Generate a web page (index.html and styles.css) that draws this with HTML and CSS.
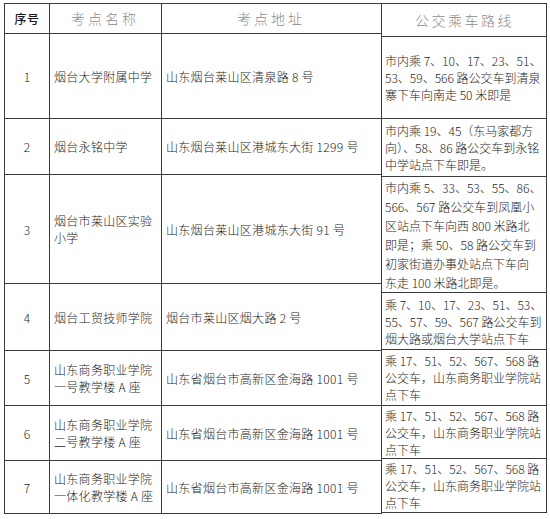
FILE: index.html
```html
<!DOCTYPE html>
<html lang="zh-CN">
<head>
<meta charset="utf-8">
<title>考点</title>
<link rel="stylesheet" href="styles.css">
</head>
<body>
<div class="sheet">
  <div class="main">
    <div class="cell head num">序号</div>
    <div class="cell head title">考点名称</div>
    <div class="cell head title">考点地址</div>

    <div class="cell num">1</div>
    <div class="cell">烟台大学附属中学</div>
    <div class="cell">山东烟台莱山区清泉路 8 号</div>

    <div class="cell num">2</div>
    <div class="cell">烟台永铭中学</div>
    <div class="cell">山东烟台莱山区港城东大街 1299 号</div>

    <div class="cell num">3</div>
    <div class="cell">烟台市莱山区实验<br>小学</div>
    <div class="cell">山东烟台莱山区港城东大街 91 号</div>

    <div class="cell num">4</div>
    <div class="cell">烟台工贸技师学院</div>
    <div class="cell">烟台市莱山区烟大路 2 号</div>

    <div class="cell num">5</div>
    <div class="cell">山东商务职业学院<br>一号教学楼 A 座</div>
    <div class="cell">山东省烟台市高新区金海路 1001 号</div>

    <div class="cell num">6</div>
    <div class="cell">山东商务职业学院<br>二号教学楼 A 座</div>
    <div class="cell">山东省烟台市高新区金海路 1001 号</div>

    <div class="cell num">7</div>
    <div class="cell">山东商务职业学院<br>一体化教学楼 A 座</div>
    <div class="cell">山东省烟台市高新区金海路 1001 号</div>
  </div>

  <div class="routes">
    <div class="cell head title wide">公交乘车路线</div>
    <div class="cell">市内乘 7、10、17、23、51、<br>53、59、566 路公交车到清泉<br>寨下车向南走 50 米即是</div>
    <div class="cell">市内乘 19、45（东马家都方<br>向）、58、86 路公交车到永铭<br>中学站点下车即是。</div>
    <div class="cell tall">市内乘 5、33、53、55、86、<br>566、567 路公交车到凤凰小<br>区站点下车向西 800 米路北<br>即是；乘 50、58 路公交车到<br>初家街道办事处站点下车向<br>东走 100 米路北即是。</div>
    <div class="cell">乘 7、10、17、23、51、53、<br>55、57、59、567 路公交车到<br>烟大路或烟台大学站点下车</div>
    <div class="cell">乘 17、51、52、567、568 路<br>公交车，山东商务职业学院站<br>点下车</div>
    <div class="cell">乘 17、51、52、567、568 路<br>公交车，山东商务职业学院站<br>点下车</div>
    <div class="cell">乘 17、51、52、567、568 路<br>公交车，山东商务职业学院站<br>点下车</div>
  </div>
</div>
</body>
</html>
```
FILE: styles.css
```css
html, body {
  margin: 0;
  padding: 0;
  background: #ffffff;
}

body {
  font-family: "Liberation Sans Narrow", "Noto Sans CJK SC", sans-serif;
  font-size: 12px;
  font-weight: 300;
  line-height: 17px;
  letter-spacing: 0.3px;
  color: #1e1e1e;
}

.sheet {
  display: flex;
  align-items: flex-start;
  padding: 3px 0 0 4px;
}

.main {
  display: grid;
  grid-template-columns: 44px 111px 219px;
  grid-template-rows: 29px 84px 55px 108px 66px 54px 54px 52px;
  gap: 1px;
  padding: 1px;
  background: #3a3a3a;
}

.routes {
  display: grid;
  grid-template-columns: 164px;
  grid-template-rows: 32px 81px 57px 115px 56px 55px 52px 53px;
  gap: 1px;
  padding: 1px 1px 1px 0;
  background: #3a3a3a;
}

.cell {
  background: #ffffff;
  display: flex;
  align-items: center;
  padding: 0 4px;
  white-space: nowrap;
}

.routes .cell {
  padding: 0 2px 0 3px;
  letter-spacing: 0;
}

.num {
  justify-content: center;
  padding: 0;
}

.head {
  justify-content: center;
}

.head.num {
  font-size: 12px;
  font-weight: 500;
  color: #1a1a1a;
  letter-spacing: 0.5px;
}

.title {
  font-size: 14px;
  color: #8c8c8c;
  letter-spacing: 3px;
  padding-left: 3px;
}

.routes .wide {
  letter-spacing: 2.5px;
  padding-left: 3px;
}

.routes .tall {
  align-items: flex-start;
  padding-top: 1px;
  line-height: 19px;
}
```
